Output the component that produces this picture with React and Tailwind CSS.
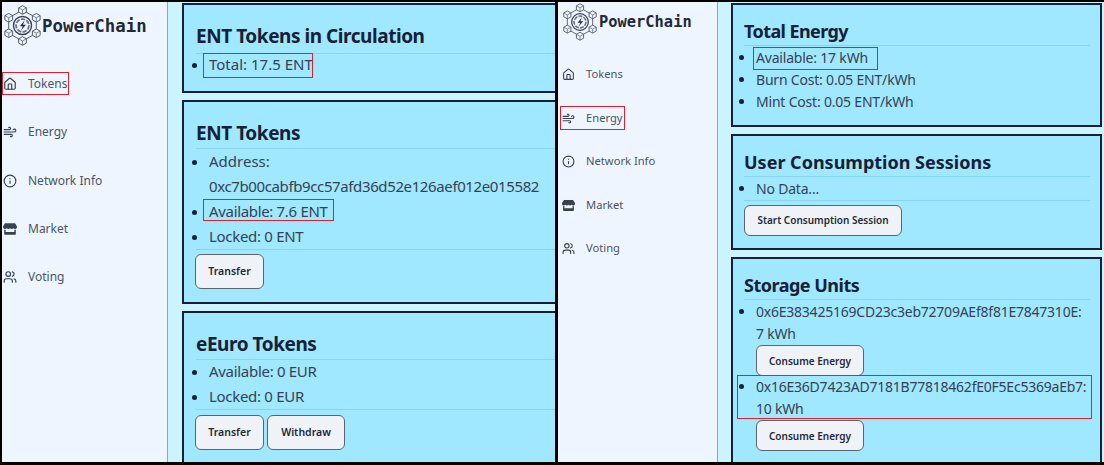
import React from "react";
import { House, Wind, Info, Users } from "lucide-react";
import { FaStore } from "react-icons/fa";

const sans = { fontFamily: '"Noto Sans", "Open Sans", sans-serif' };

function Logo({ className }) {
  const nodes = [[24, 6], [40, 15], [40, 33], [24, 42], [8, 33], [8, 15]];
  return (
    <svg viewBox="2.5 0.5 43 47" className={className} fill="none" stroke="#4b5563" strokeWidth="1.1">
      <path d="M24 6 L40 15 L40 33 L24 42 L8 33 L8 15 Z" />
      <circle cx="24" cy="24" r="10.5" strokeWidth="1.6" stroke="#374151" />
      <circle cx="24" cy="24" r="7.5" strokeWidth="2" strokeDasharray="5 1.5" stroke="#6b7280" />
      <path d="M26.5 18 L21 25 L24.5 25 L22 30 L28 23 L24.5 23 Z" fill="#1f2937" stroke="none" />
      {nodes.map(([x, y], i) => (
        <g key={i}>
          <path d={`M${x} ${y - 5} L${x + 4.5} ${y - 2.5} L${x + 4.5} ${y + 2.5} L${x} ${y + 5} L${x - 4.5} ${y + 2.5} L${x - 4.5} ${y - 2.5} Z`} fill="#eef5ff" />
          <path d={`M${x - 4.5} ${y - 2.5} L${x} ${y} L${x + 4.5} ${y - 2.5} M${x} ${y} L${x} ${y + 5}`} strokeWidth="0.8" />
        </g>
      ))}
    </svg>
  );
}

function Box({ className }) {
  return <span className={"absolute border border-[#e0202c] pointer-events-none " + className} />;
}

function Btn({ children, className }) {
  return (
    <button className={"bg-[#eff3f7] border border-[#5b6570] rounded-[6px] font-semibold text-[#1f2937] " + className}>
      {children}
    </button>
  );
}

function NavItem({ icon, label, children, rowClass }) {
  return (
    <div className={"relative flex items-center text-[#4b5563] " + rowClass}>
      {icon}
      <span>{label}</span>
      {children}
    </div>
  );
}

function Left() {
  const icon = "w-[14px] h-[14px] text-[#374151] mr-[11px] shrink-0";
  const row = "h-[48.3px] text-[12px] pl-[1px]";
  return (
    <div className="w-[553px] h-[460px] flex bg-[#ccf4ff] overflow-hidden" style={sans}>
      <aside className="w-[166px] shrink-0 bg-[#eef5ff] border-r border-[#94a3b8]">
        <div className="flex items-center h-[46px] pl-[2px]">
          <Logo className="w-[37px] h-[43px] shrink-0" />
          <span className="font-['DejaVu_Sans_Mono'] font-bold text-[17.4px] text-[#1f2937] ml-[1px] mt-[2px]">PowerChain</span>
        </div>
        <nav className="mt-[12px] flex flex-col">
          <NavItem rowClass={row} label="Tokens" icon={<House className={icon} strokeWidth={2} />}>
            <Box className="left-0 top-[12px] w-[67px] h-[23px]" />
          </NavItem>
          <NavItem rowClass={row} label="Energy" icon={<Wind className={icon} strokeWidth={2} />} />
          <NavItem rowClass={row} label="Network Info" icon={<Info className={icon} strokeWidth={2} />} />
          <NavItem rowClass={row} label="Market" icon={<FaStore className={icon} />} />
          <NavItem rowClass={row} label="Voting" icon={<Users className={icon} strokeWidth={2} />} />
        </nav>
      </aside>
      <main className="flex-1 min-w-0 pl-[14px] pt-[1px] flex flex-col gap-[7px]">
        <section className="shrink-0 h-[90px] bg-[#9fe8ff] border-2 border-r-0 border-[#172036] pl-[12px] pt-[16px]">
          <h2 className="text-[19px] tracking-[-0.45px] leading-[30px] font-bold text-[#172036] border-b border-[#86d4f2] pb-[2px]">ENT Tokens in Circulation</h2>
          <ul className="list-disc pl-[12px] ml-[1px] -mt-[2px] text-[15px] leading-[25px] text-[#374151] marker:text-[#172036]">
            <li className="relative">Total: 17.5 ENT<Box className="-left-[6px] top-[1px] w-[110px] h-[25px]" /></li>
          </ul>
        </section>
        <section className="shrink-0 h-[204px] bg-[#9fe8ff] border-2 border-r-0 border-[#172036] pl-[12px] pt-[16px]">
          <h2 className="text-[19px] tracking-[-0.45px] leading-[30px] font-bold text-[#172036] border-b border-[#86d4f2]">ENT Tokens</h2>
          <ul className="list-disc pl-[13px] text-[15px] leading-[25px] text-[#374151] marker:text-[#172036] border-b border-[#86d4f2]">
            <li>Address:<br /><span className="tracking-[-0.38px]">0xc7b00cabfb9cc57afd36d52e126aef012e015582</span></li>
            <li className="relative"><span className="tracking-[-0.33px]">Available: 7.6 ENT</span><Box className="-left-[6px] top-0 w-[131px] h-[22px]" /></li>
            <li className="tracking-[-0.3px]">Locked: 0 ENT</li>
          </ul>
          <Btn className="mt-[4px] -ml-[1px] w-[69px] h-[35px] text-[10.5px]">Transfer</Btn>
        </section>
        <section className="shrink-0 h-[200px] bg-[#9fe8ff] border-2 border-r-0 border-[#172036] pl-[12px] pt-[16px]">
          <h2 className="text-[19px] tracking-[-0.45px] leading-[30px] font-bold text-[#172036] border-b border-[#86d4f2]">eEuro Tokens</h2>
          <ul className="list-disc pl-[13px] -mt-[1px] text-[15px] leading-[25px] tracking-[-0.3px] text-[#374151] marker:text-[#172036] border-b border-[#86d4f2]">
            <li>Available: 0 EUR</li>
            <li>Locked: 0 EUR</li>
          </ul>
          <div className="flex gap-[3px] mt-[5px] -ml-[1px]">
            <Btn className="w-[69px] h-[35px] text-[10.5px]">Transfer</Btn>
            <Btn className="w-[78px] h-[35px] text-[10.5px]">Withdraw</Btn>
          </div>
        </section>
      </main>
    </div>
  );
}

function Right() {
  const icon = "w-[13px] h-[13px] text-[#374151] mr-[11px] shrink-0";
  const row = "h-[43.5px] text-[11.2px] pl-[4px]";
  return (
    <div className="flex-1 min-w-0 h-[460px] flex bg-[#ccf4ff] overflow-hidden" style={sans}>
      <aside className="w-[160px] shrink-0 bg-[#eef5ff] border-r border-[#94a3b8]">
        <div className="flex items-center h-[40px] pl-[5px]">
          <Logo className="w-[34px] h-[38px] shrink-0" />
          <span className="font-['DejaVu_Sans_Mono'] font-bold text-[15.4px] text-[#1f2937] ml-[2px] mt-[2px]">PowerChain</span>
        </div>
        <nav className="mt-[11px] flex flex-col">
          <NavItem rowClass={row} label="Tokens" icon={<House className={icon} strokeWidth={2} />} />
          <NavItem rowClass={row} label="Energy" icon={<Wind className={icon} strokeWidth={2} />}>
            <Box className="left-[2px] top-[9px] w-[65px] h-[24px]" />
          </NavItem>
          <NavItem rowClass={row} label="Network Info" icon={<Info className={icon} strokeWidth={2} />} />
          <NavItem rowClass={row} label="Market" icon={<FaStore className={icon} />} />
          <NavItem rowClass={row} label="Voting" icon={<Users className={icon} strokeWidth={2} />} />
        </nav>
      </aside>
      <main className="flex-1 min-w-0 pl-[13px] pr-[2px] pt-[1px] flex flex-col gap-[7px]">
        <section className="shrink-0 h-[124px] bg-[#9fe8ff] border-2 border-[#172036] pl-[11px] pr-[10px] pt-[13px]">
          <h2 className="text-[18px] tracking-[-0.6px] leading-[27px] font-bold text-[#172036] border-b border-[#86d4f2]">Total Energy</h2>
          <ul className="list-disc pl-[12px] mt-[1px] text-[14px] tracking-[-0.2px] leading-[22px] text-[#374151] marker:text-[#172036]">
            <li className="relative">Available: 17 kWh<Box className="-left-[3px] top-0 w-[125px] h-[23px]" /></li>
            <li>Burn Cost: 0.05 ENT/kWh</li>
            <li>Mint Cost: 0.05 ENT/kWh</li>
          </ul>
        </section>
        <section className="shrink-0 h-[116px] bg-[#9fe8ff] border-2 border-[#172036] pl-[11px] pr-[10px] pt-[13px]">
          <h2 className="text-[18px] leading-[27px] font-bold text-[#172036] border-b border-[#86d4f2]">User Consumption Sessions</h2>
          <ul className="list-disc pl-[12px] mt-[1px] text-[14px] tracking-[-0.2px] leading-[22px] text-[#374151] marker:text-[#172036] border-b border-[#86d4f2]">
            <li>No Data...</li>
          </ul>
          <Btn className="mt-[4px] w-[158px] h-[31px] text-[10px]">Start Consumption Session</Btn>
        </section>
        <section className="shrink-0 h-[210px] bg-[#9fe8ff] border-2 border-[#172036] pl-[11px] pr-[10px] pt-[13px]">
          <h2 className="text-[18px] tracking-[-0.5px] leading-[27px] font-bold text-[#172036] border-b border-[#86d4f2]">Storage Units</h2>
          <ul className="list-disc pl-[12px] mt-[1px] text-[14px] tracking-[-0.23px] leading-[22px] text-[#374151] marker:text-[#172036]">
            <li>
              0x6E383425169CD23c3eb72709AEf8f81E7847310E:<br />7 kWh
              <Btn className="block w-[108px] h-[31px] text-[10px] tracking-normal">Consume Energy</Btn>
            </li>
            <li className="relative">
              0x16E36D7423AD7181B77818462fE0F5Ec5369aEb7:<br />10 kWh
              <Box className="-left-[19px] -top-[1px] w-[355px] h-[44px]" />
              <Btn className="block w-[108px] h-[31px] text-[10px] tracking-normal">Consume Energy</Btn>
            </li>
          </ul>
        </section>
      </main>
    </div>
  );
}

export default function App() {
  return (
    <div className="w-[1104px] h-[465px] bg-black flex gap-[3px] pl-[2px] pt-[2px] overflow-hidden">
      <Left />
      <Right />
    </div>
  );
}
